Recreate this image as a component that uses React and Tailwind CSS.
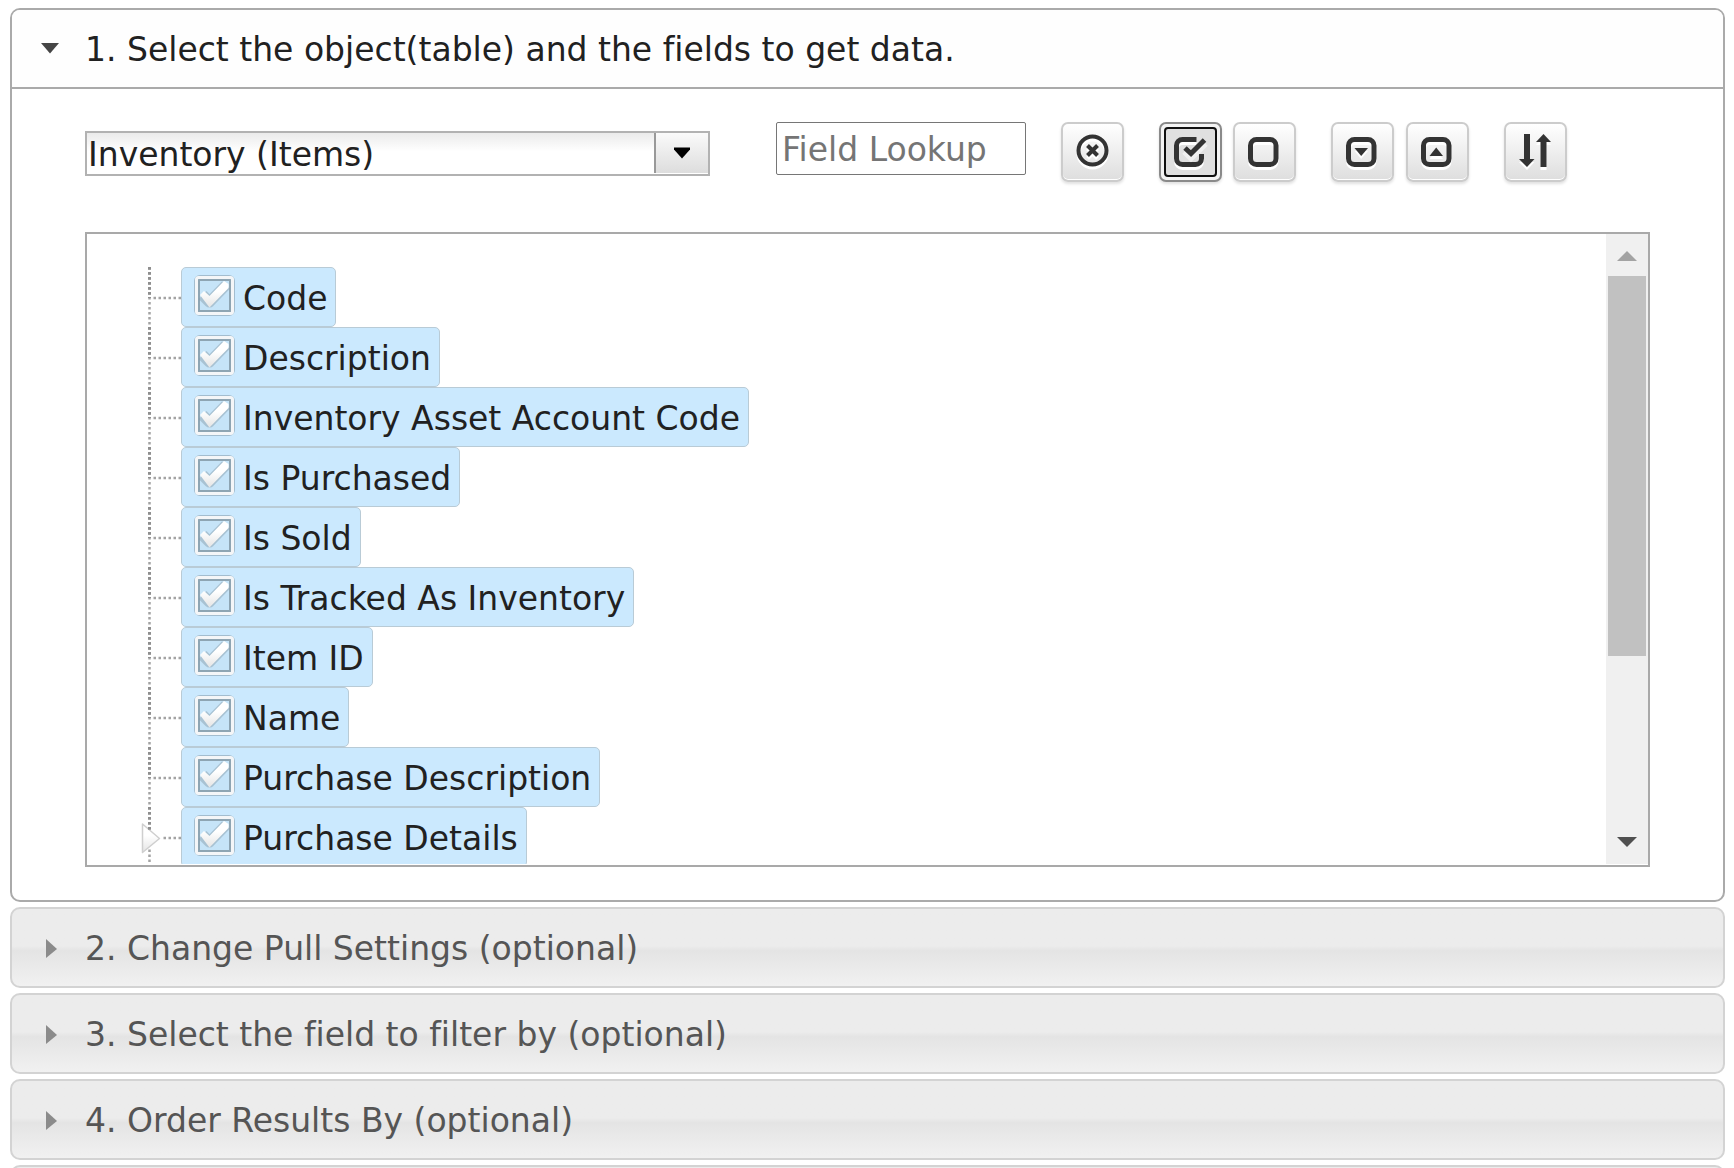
import React from "react";

const fields = [
  "Code",
  "Description",
  "Inventory Asset Account Code",
  "Is Purchased",
  "Is Sold",
  "Is Tracked As Inventory",
  "Item ID",
  "Name",
  "Purchase Description",
  "Purchase Details",
];

const closedSections = [
  "2. Change Pull Settings (optional)",
  "3. Select the field to filter by (optional)",
  "4. Order Results By (optional)",
  "",
];

function ToolButton({ label, active, children }) {
  return (
    <button
      type="button"
      aria-label={label}
      className={
        active
          ? "flex h-[60px] w-[63px] shrink-0 rounded-[7px] border-2 border-[#8a8a8a] bg-[#f4f4f4] p-[3px] shadow-[0_2px_3px_rgba(0,0,0,0.12)]"
          : "flex h-[60px] w-[63px] shrink-0 rounded-[7px] border-2 border-[#cccccc] bg-linear-to-b from-white to-[#dedede] shadow-[0_2px_3px_rgba(0,0,0,0.12),inset_0_-1px_0_#fff]"
      }
    >
      {active ? (
        <span className="flex h-full w-full rounded-[4px] border-2 border-[#101010] bg-[#e0e0e0]">
          <svg viewBox="7 7 49 46" className="h-[46px] w-[49px]" aria-hidden="true">
            {children}
          </svg>
        </span>
      ) : (
        <svg viewBox="2 2 59 56" className="h-[56px] w-[59px]" aria-hidden="true">
          {children}
        </svg>
      )}
    </button>
  );
}

function Embossed({ children }) {
  return (
    <>
      <g transform="translate(0 3)" stroke="#fff" fill="#fff">
        {children}
      </g>
      <g stroke="#333" fill="#333">{children}</g>
    </>
  );
}

function Box() {
  return <rect x="17.5" y="17.5" width="25.5" height="25" rx="6" fill="none" strokeWidth="5" />;
}

function Branch({ expandable }) {
  return (
    <svg viewBox="0 0 41 60" className="h-[60px] w-[41px] shrink-0" aria-hidden="true">
      {expandable && (
        <path
          d="M2.5 17L19.5 31.5L2.5 45.5Z"
          fill="url(#white-fade)"
          stroke="#cfcfcf"
          strokeWidth="1.5"
          strokeLinejoin="round"
        />
      )}
      <g stroke="#a3a3a3" fill="none">
        {expandable ? (
          <path d="M9.5 42.5V60" strokeWidth="2.5" strokeDasharray="2.5 2.5" />
        ) : (
          <path d="M9.5 0V60" strokeWidth="2.5" strokeDasharray="2.5 2.5" />
        )}
        {expandable ? (
          <path d="M9.5 0V23" strokeWidth="3" stroke="#8f8f8f" strokeDasharray="2.8 2.2" />
        ) : (
          <path d="M9.5 0V31" strokeWidth="3" stroke="#8f8f8f" strokeDasharray="2.8 2.2" />
        )}
        {expandable ? (
          <path d="M23.5 31H41" strokeWidth="2.5" strokeDasharray="2.5 2.5" />
        ) : (
          <path d="M13.5 31H41" strokeWidth="2.5" strokeDasharray="2.5 2.5" />
        )}
      </g>
    </svg>
  );
}

function CheckMark() {
  return (
    <svg viewBox="0 0 42 42" className="pointer-events-none col-start-1 row-start-1 h-[42px] w-[42px]" aria-hidden="true">
      <rect x="3" y="3" width="37" height="37" rx="4" fill="#c6e4f8" stroke="#8399a7" strokeOpacity="0.55" strokeWidth="4" />
      <rect x="6" y="6" width="31" height="31" fill="none" stroke="#8ea5b3" strokeWidth="2" />
      <path d="M9.500 21L16.500 28L33 11" fill="none" stroke="#8399a7" strokeOpacity="0.45" strokeWidth="11" strokeLinejoin="round" />
      <rect x="3.500" y="3.500" width="36" height="36" rx="2" fill="none" stroke="#f4f6f8" strokeWidth="3" />
      <path d="M7 21L11 17L16.500 22L31 7L35.500 10V14L16.500 33.500Z" fill="url(#white-fade)" />
    </svg>
  );
}

function FieldRow({ name, expandable }) {
  return (
    <li className="flex">
      <Branch expandable={expandable} />
      <label className="flex h-[60px] items-center rounded-[5px] border border-[#b9cbd6] bg-[#cbe9fe] pr-2 pl-[11px]">
        <span className="mb-1 grid h-[42px] w-[42px] shrink-0">
          <input
            type="checkbox"
            defaultChecked
            className="col-start-1 row-start-1 h-[42px] w-[42px] appearance-none"
          />
          <CheckMark />
        </span>
        <span className="pt-[3px] pl-2 whitespace-nowrap">{name}</span>
      </label>
    </li>
  );
}

export default function App() {
  return (
    <main className="flex h-screen flex-col gap-[5px] overflow-hidden bg-white px-[9px] pt-2 pl-2.5 font-['Verdana','DejaVu_Sans',sans-serif] text-[33px] leading-[40px] text-[#212121] [font-variant-ligatures:none]">
      <svg className="absolute h-0 w-0" aria-hidden="true">
        <defs>
          <linearGradient id="white-fade" x1="0" y1="0" x2="0" y2="1">
            <stop offset="0.4" stopColor="#ffffff" />
            <stop offset="1" stopColor="#e4e4e4" />
          </linearGradient>
        </defs>
      </svg>

      <section className="shrink-0 rounded-[10px] border-2 border-[#aaaaaa]">
        <h2 className="border-b-2 border-[#aaaaaa]">
          <button type="button" aria-expanded="true" className="flex h-[77px] w-full items-center gap-[25px] rounded-t-[8px] bg-[#fefefe] pl-7 text-left">
            <svg viewBox="0 0 20 20" className="h-5 w-5 shrink-0" aria-hidden="true">
              <path d="M1 4H19L10 14.5Z" fill="#454545" />
            </svg>
            <span className="pt-[3px]">1. Select the object(table) and the fields to get data.</span>
          </button>
        </h2>

        <div className="px-[73px] py-[33px]">
          <div className="flex items-start">
            <div className="mt-[9px] flex h-[45px] w-[625px] shrink-0 border-2 border-[#b2b2b2]">
              <select
                aria-label="Object"
                className="h-[41px] flex-1 appearance-none bg-linear-to-b from-[#ebebeb] to-white to-45% pt-0.5 pl-px"
              >
                <option>Inventory (Items)</option>
              </select>
              <span className="pointer-events-none mb-px flex w-[54px] items-center justify-center border-l-2 border-[#999999] bg-linear-to-b from-[#fafafa] to-[#dddddd]">
                <svg viewBox="0 0 20 12" className="h-3 w-5" aria-hidden="true">
                  <path d="M2 0.500H18V2.500L10 11.500L2 2.500Z" fill="#000" />
                </svg>
              </span>
            </div>

            <input
              type="text"
              aria-label="Field Lookup"
              placeholder="Field Lookup"
              className="ml-[66px] h-[53px] w-[250px] shrink-0 rounded-[2px] border border-[#767676] px-[5px] pt-0.5 placeholder:text-[#757575]"
            />

            <div className="ml-[35px] flex gap-[35px]">
              <ToolButton label="Clear lookup">
                <Embossed>
                  <circle cx="31.5" cy="28.5" r="14" fill="none" strokeWidth="4" />
                  <path d="M26.5 23.5L36.5 33.5M36.5 23.5L26.5 33.5" fill="none" strokeWidth="4" />
                </Embossed>
              </ToolButton>
              <div className="flex gap-[11px]">
                <ToolButton label="Select all" active>
                  <Embossed>
                    <path d="M37.5 17.5H23.5A6 6 0 0 0 17.5 23.5V36.5A6 6 0 0 0 23.5 42.5H36.5A6 6 0 0 0 42.5 36.5V32" fill="none" strokeWidth="5" />
                  </Embossed>
                  <path d="M26.5 28.5L32 34L45.5 20.5" fill="none" stroke="#f0f0f0" strokeWidth="9" />
                  <path d="M26 26L32 31.5L45.5 18" fill="none" stroke="#333" strokeWidth="5" />
                </ToolButton>
                <ToolButton label="Deselect all">
                  <Embossed>
                    <Box />
                  </Embossed>
                </ToolButton>
              </div>
              <div className="flex gap-3">
                <ToolButton label="Expand all">
                  <Embossed>
                    <Box />
                    <path d="M23.5 26H37L30.2 34Z" stroke="none" />
                  </Embossed>
                </ToolButton>
                <ToolButton label="Collapse all">
                  <Embossed>
                    <Box />
                    <path d="M23.5 34H37L30.2 25.5Z" stroke="none" />
                  </Embossed>
                </ToolButton>
              </div>
              <ToolButton label="Sort">
                <Embossed>
                  <path d="M20 12H26V37H30.5L23 45L15 37H20Z" stroke="none" />
                  <path d="M36.5 45V20H32L39.5 12L47 20H42.5V45Z" stroke="none" />
                </Embossed>
              </ToolButton>
            </div>
          </div>

          <div className="mt-[50px] flex h-[635px] border-2 border-[#a9a9a9] pb-px">
            <ul className="flex-1 overflow-hidden pt-[33px] pl-[53px]">
              {fields.map((name) => (
                <FieldRow key={name} name={name} expandable={name === "Purchase Details"} />
              ))}
            </ul>
            <div className="flex w-[42px] flex-col items-center justify-between bg-[#f0f0f0] pb-[17px]" aria-hidden="true">
              <div className="flex w-full flex-col items-center">
                <svg viewBox="0 0 20 10" className="mt-[17px] mb-[15px] h-[10px] w-5">
                  <path d="M0 10L10 0L20 10Z" fill="#a3a3a3" />
                </svg>
                <div className="h-[380px] w-[38px] bg-[#c1c1c1]" />
              </div>
              <svg viewBox="0 0 20 10" className="h-[10px] w-5">
                <path d="M0 0H20L10 10Z" fill="#505050" />
              </svg>
            </div>
          </div>
        </div>
      </section>

      {closedSections.map((title) => (
        <h2 key={title} className="shrink-0">
          <button
            type="button"
            aria-expanded="false"
            className="flex h-[81px] w-full items-center gap-[25px] rounded-[10px] border-2 border-[#d3d3d3] bg-linear-to-b from-[#ececec] from-48% via-[#e4e4e4] via-54% to-[#f1f1f1] pl-7 text-left text-[#555555]"
          >
            <svg viewBox="0 0 20 20" className="h-5 w-5 shrink-0" aria-hidden="true">
              <path d="M6 1L17 11L6 20Z" fill="#8b8b8b" />
            </svg>
            <span className="pt-0.5">{title}</span>
          </button>
        </h2>
      ))}
    </main>
  );
}
